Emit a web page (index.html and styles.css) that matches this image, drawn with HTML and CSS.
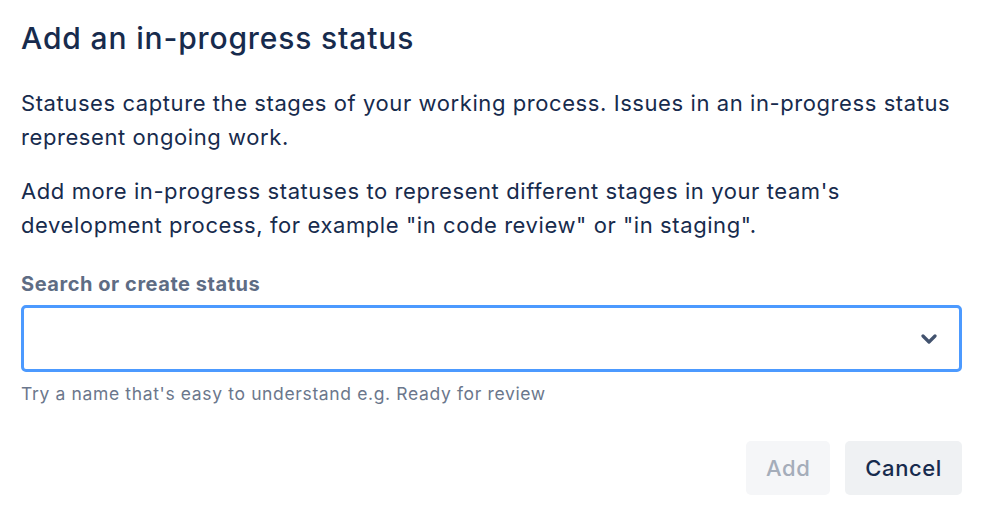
FILE: index.html
```html
<!DOCTYPE html>
<html>
<head>
<meta charset="utf-8">
<link rel="stylesheet" href="styles.css">
</head>
<body>
<div class="dialog">
  <h1 class="title">Add an in-progress status</h1>
  <p class="text">Statuses capture the stages of your working process. Issues in an in-progress status represent ongoing work.</p>
  <p class="text">Add more in-progress statuses to represent different stages in your team's development process, for example "in code review" or "in staging".</p>
  <div class="field">
    <label class="label">Search or create status</label>
    <div class="select">
      <svg class="chevron" width="16" height="12" viewBox="0 0 16 12"><path d="M2 3 L8 9 L14 3" fill="none" stroke="#42526E" stroke-width="3.2" stroke-linecap="round" stroke-linejoin="round"/></svg>
    </div>
    <div class="help">Try a name that's easy to understand e.g. Ready for review</div>
  </div>
  <div class="actions">
    <button class="btn btn-disabled">Add</button>
    <button class="btn">Cancel</button>
  </div>
</div>
</body>
</html>
```

FILE: styles.css
```css
html, body {
  margin: 0;
  padding: 0;
  background: #fff;
}
body {
  font-family: Inter, "Noto Sans", sans-serif;
  color: #172B4D;
}
.dialog {
  padding: 16px 36px 0 21px;
}
.title {
  font-size: 30px;
  font-weight: 500;
  line-height: 44px;
  margin: 0 0 26px 0;
  letter-spacing: 0.85px;
}
.text {
  font-size: 22px;
  line-height: 34px;
  margin: 0 0 20px 0;
  letter-spacing: 0.58px;
}
.field {
  padding-top: 8px;
}
.label {
  display: block;
  font-size: 20px;
  font-weight: 700;
  color: #5E6C84;
  line-height: 28px;
  margin-bottom: 7px;
  letter-spacing: 0.55px;
}
.select {
  height: 61px;
  border: 3px solid #4C9AFF;
  border-radius: 5px;
  display: flex;
  align-items: center;
  justify-content: flex-end;
  padding-right: 22px;
}
.help {
  font-size: 17.5px;
  color: #6B778C;
  margin-top: 10px;
  line-height: 24px;
  letter-spacing: 0.64px;
}
.actions {
  display: flex;
  justify-content: flex-end;
  gap: 15px;
  margin-top: 35px;
}
.btn {
  font-family: inherit;
  font-size: 22px;
  font-weight: 500;
  height: 54px;
  padding: 0 20px;
  border: none;
  border-radius: 5px;
  background: #EFF1F3;
  color: #172B4D;
  letter-spacing: 0.6px;
}
.btn-disabled {
  background: #F5F6F8;
  color: #A5ADBA;
}
```
